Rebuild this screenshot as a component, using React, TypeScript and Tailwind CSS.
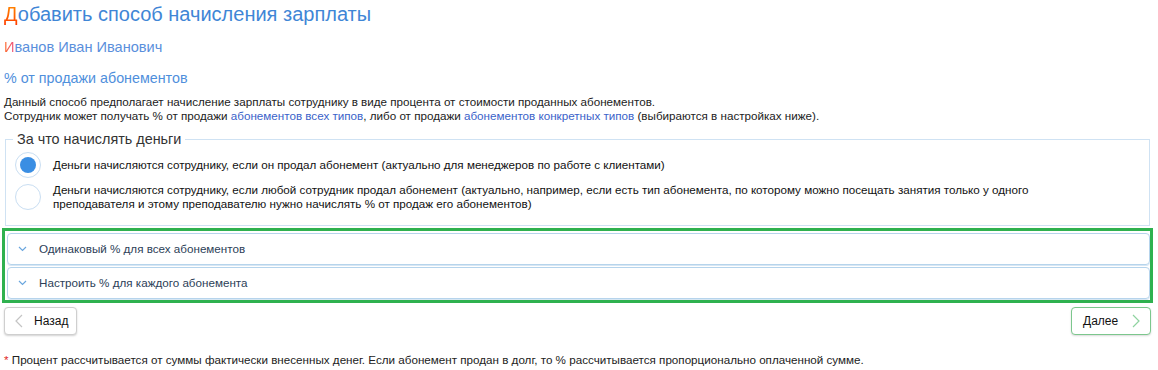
import React from "react";

const Chevron = ({ dir, className }: { dir: "left" | "right" | "down"; className?: string }) => {
  const d =
    dir === "left" ? "M7 1 L1 7 L7 13" : dir === "right" ? "M1 1 L7 7 L1 13" : "M1 1 L4.5 4.5 L8 1";
  const box = dir === "down" ? "0 0 9 6" : "0 0 8 14";
  return (
    <svg viewBox={box} className={className} fill="none" stroke="currentColor" strokeWidth="1.2">
      <path d={d} />
    </svg>
  );
};

const Radio = ({ checked }: { checked?: boolean }) => (
  <span className="flex h-[26px] w-[26px] shrink-0 items-center justify-center rounded-full border-[1.5px] border-[#c9def2] bg-white">
    {checked && <span className="h-[16px] w-[16px] rounded-full bg-[#3a8ee3]" />}
  </span>
);

const accordion = ["Одинаковый % для всех абонементов", "Настроить % для каждого абонемента"];

export default function App() {
  return (
    <div className="min-h-[370px] bg-white px-[4px] font-['Liberation_Sans',Arial,sans-serif] text-[11.65px] leading-[14px] text-[#222]">
      <h1 className="pt-[2px] text-[20px] leading-[24px] text-[#3f86d6]">
        <span className="bg-gradient-to-b from-[#ff8c00] to-[#ff3a00] bg-clip-text text-transparent">Д</span>
        обавить способ начисления зарплаты
      </h1>
      <p className="mt-[13px] text-[14.6px] leading-[16px] text-[#5a8fdc]">
        <span className="bg-gradient-to-r from-[#ff6a00] to-[#ec4f86] bg-clip-text text-transparent">И</span>
        ванов Иван Иванович
      </p>
      <p className="mt-[15px] text-[14.3px] leading-[16px] text-[#4f8fdc]">% от продажи абонементов</p>
      <div className="mt-[9px]">
        <p>Данный способ предполагает начисление зарплаты сотруднику в виде процента от стоимости проданных абонементов.</p>
        <p>
          Сотрудник может получать % от продажи <span className="text-[#3a62c9]">абонементов всех типов</span>, либо от
          продажи <span className="text-[#3a62c9]">абонементов конкретных типов</span> (выбираются в настройках ниже).
        </p>
      </div>

      <fieldset className="mt-[8px] ml-[1px] mr-[4px] border border-[#cfe2f3] pt-[5px] pb-[14px] pl-[9px]">
        <legend className="ml-[-2px] px-[4px] text-[14.4px] leading-[16px] text-[#333]">За что начислять деньги</legend>
        <div className="flex flex-col gap-[5px]">
          <label className="flex items-center gap-[12px] text-[#111]">
            <Radio checked />
            <span>Деньги начисляются сотруднику, если он продал абонемент (актуально для менеджеров по работе с клиентами)</span>
          </label>
          <label className="flex items-center gap-[12px] text-[#111]">
            <Radio />
            <span>
              Деньги начисляются сотруднику, если любой сотрудник продал абонемент (актуально, например, если есть тип
              абонемента, по которому можно посещать занятия только у одного
              <br />
              преподавателя и этому преподавателю нужно начислять % от продаж его абонементов)
            </span>
          </label>
        </div>
      </fieldset>

      <div className="mt-[2px] ml-[-2px] mr-[1px] flex flex-col gap-[2px] border-[3px] border-[#2fb14f] pt-[2px] pb-[1px] pl-[2px]">
        {accordion.map((item) => (
          <div
            key={item}
            className="flex h-[32px] items-center rounded-[4px] border border-[#b6d4ec] shadow-[0_1px_0_#d7e7f4] text-[#2c3e57]"
          >
            <Chevron dir="down" className="ml-[10px] h-[6px] w-[9px] text-[#6aa6de]" />
            <span className="ml-[12px]">{item}</span>
          </div>
        ))}
      </div>

      <div className="mt-[4px] mr-[3px] flex justify-between">
        <button className="flex h-[28px] w-[73px] items-center rounded-[4px] border border-[#cfcfcf] bg-white pl-[10px] text-[12px] text-[#111] shadow-[0_1px_2px_rgba(0,0,0,0.18)]">
          <Chevron dir="left" className="h-[14px] w-[8px] text-[#c4c4c4]" />
          <span className="ml-[11px]">Назад</span>
        </button>
        <button className="flex h-[28px] w-[80px] items-center rounded-[4px] border border-[#7cc78d] bg-white pl-[11px] text-[12px] text-[#111] shadow-[0_1px_2px_rgba(0,0,0,0.15)]">
          <span>Далее</span>
          <Chevron dir="right" className="ml-[14px] h-[14px] w-[8px] text-[#8fd3a0]" />
        </button>
      </div>

      <p className="mt-[18px]">
        <span className="text-[#e0241b]">*</span> Процент рассчитывается от суммы фактически внесенных денег. Если абонемент
        продан в долг, то % рассчитывается пропорционально оплаченной сумме.
      </p>
    </div>
  );
}
